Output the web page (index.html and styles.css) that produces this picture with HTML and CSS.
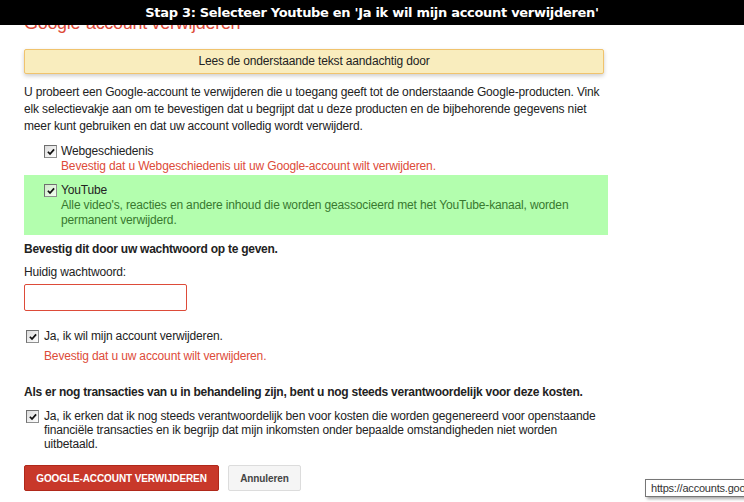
FILE: index.html
```html
<!DOCTYPE html>
<html lang="nl">
<head>
  <meta charset="UTF-8" />
  <title>Google-account verwijderen</title>
  <link rel="stylesheet" href="styles.css">
</head>
<body>

  <div class="banner">Stap 3: Selecteer Youtube en 'Ja ik wil mijn account verwijderen'</div>

  <div class="page">
    <h1 class="title">Google-account verwijderen</h1>

    <div class="notice">Lees de onderstaande tekst aandachtig door</div>

    <p class="intro">U probeert een Google-account te verwijderen die u toegang geeft tot de onderstaande Google-producten. Vink<br>
      elk selectievakje aan om te bevestigen dat u begrijpt dat u deze producten en de bijbehorende gegevens niet<br>
      meer kunt gebruiken en dat uw account volledig wordt verwijderd.</p>

    <!-- products -->
    <div class="product">
      <span class="checkbox"><svg viewBox="0 0 9 9"><path d="M1 4.2 L3.4 6.8 L8 1.6" /></svg></span>
      <div class="product-text">
        <div class="product-name">Webgeschiedenis</div>
        <div class="error">Bevestig dat u Webgeschiedenis uit uw Google-account wilt verwijderen.</div>
      </div>
    </div>

    <div class="product selected">
      <span class="checkbox"><svg viewBox="0 0 9 9"><path d="M1 4.2 L3.4 6.8 L8 1.6" /></svg></span>
      <div class="product-text">
        <div class="product-name">YouTube</div>
        <div class="product-desc">Alle video's, reacties en andere inhoud die worden geassocieerd met het YouTube-kanaal, worden<br>
          permanent verwijderd.</div>
      </div>
    </div>

    <div class="section-title">Bevestig dit door uw wachtwoord op te geven.</div>
    <div class="field-label">Huidig wachtwoord:</div>
    <input class="password" type="password" />

    <div class="confirm">
      <span class="checkbox"><svg viewBox="0 0 9 9"><path d="M1 4.2 L3.4 6.8 L8 1.6" /></svg></span>
      <div>Ja, ik wil mijn account verwijderen.</div>
    </div>
    <div class="error confirm-error">Bevestig dat u uw account wilt verwijderen.</div>

    <div class="section-title section-costs">Als er nog transacties van u in behandeling zijn, bent u nog steeds verantwoordelijk voor deze kosten.</div>

    <div class="confirm confirm-costs">
      <span class="checkbox"><svg viewBox="0 0 9 9"><path d="M1 4.2 L3.4 6.8 L8 1.6" /></svg></span>
      <div>Ja, ik erken dat ik nog steeds verantwoordelijk ben voor kosten die worden gegenereerd voor openstaande<br>
        financiële transacties en ik begrijp dat mijn inkomsten onder bepaalde omstandigheden niet worden<br>
        uitbetaald.</div>
    </div>

    <div class="actions">
      <button class="btn btn-delete">GOOGLE-ACCOUNT VERWIJDEREN</button>
      <button class="btn btn-cancel">Annuleren</button>
    </div>
  </div>

  <div class="tooltip">https://accounts.google.com/DeleteAccount</div>

</body>
</html>
```

FILE: styles.css
```css
:root {
  --text: #222222;
  --red: #dd4b39;
  --green-bg: #b3feae;
  --green-text: #38792f;
}

* {
  box-sizing: border-box;
  margin: 0;
  padding: 0;
}

body {
  font-family: "Liberation Sans", Arial, sans-serif;
  font-size: 12px;
  letter-spacing: -0.15px;
  color: var(--text);
  background: #ffffff;
  width: 744px;
  height: 502px;
  overflow: hidden;
  position: relative;
}

.banner {
  position: absolute;
  top: 0;
  left: 0;
  right: 0;
  height: 25px;
  background: #000000;
  color: #ffffff;
  font-family: "DejaVu Sans", sans-serif;
  font-weight: bold;
  font-size: 13px;
  letter-spacing: -0.3px;
  line-height: 25px;
  text-align: center;
  z-index: 10;
}

.page {
  padding: 12px 0 0 24px;
  width: 640px;
}

.title {
  font-size: 18px;
  line-height: 22px;
  letter-spacing: -0.3px;
  font-weight: normal;
  color: var(--red);
}

.notice {
  margin-top: 15px;
  width: 580px;
  height: 25px;
  line-height: 23px;
  background: #f9edbe;
  border: 1px solid #f0c36d;
  border-radius: 2px;
  box-shadow: 0 2px 4px rgba(0, 0, 0, 0.2);
  text-align: center;
}

.intro {
  margin-top: 10px;
  line-height: 17px;
}

.product {
  display: flex;
  align-items: flex-start;
  gap: 4px;
  margin-top: 9px;
  padding-left: 20px;
  width: 584px;
  line-height: 15px;
}

.product.selected {
  margin-top: 1px;
  padding-top: 8px;
  padding-bottom: 7px;
  background: var(--green-bg);
}

.product-desc {
  color: var(--green-text);
}

.error {
  color: var(--red);
}

.checkbox {
  display: inline-flex;
  align-items: center;
  justify-content: center;
  flex: none;
  width: 13px;
  height: 13px;
  margin-top: 1px;
  border: 1px solid #8e8f8f;
  border-top-color: #6f6f6f;
  border-left-color: #6f6f6f;
  background: linear-gradient(135deg, #dcdcdc, #ffffff);
}

.selected .checkbox {
  background: linear-gradient(135deg, #cfe9c9, #f4fff2);
}

.checkbox svg {
  width: 8px;
  height: 8px;
  margin-top: 1px;
}

.checkbox path {
  fill: none;
  stroke: #111111;
  stroke-width: 2;
}

.section-title {
  margin-top: 7px;
  font-weight: bold;
  letter-spacing: -0.25px;
  line-height: 15px;
}

.field-label {
  margin-top: 8px;
  line-height: 15px;
}

.password {
  display: block;
  margin-top: 4px;
  width: 163px;
  height: 27px;
  border: 1px solid #dd4b39;
  border-radius: 2px;
  background: #ffffff;
}

.confirm {
  display: flex;
  align-items: flex-start;
  gap: 5px;
  margin-top: 18px;
  padding-left: 2px;
  line-height: 15px;
}

.confirm-error {
  margin-top: 5px;
  padding-left: 20px;
  line-height: 15px;
}

.section-costs {
  margin-top: 21px;
}

.confirm-costs {
  margin-top: 9px;
  line-height: 14px;
}

.actions {
  display: flex;
  gap: 9px;
  margin-top: 14px;
}

.btn {
  height: 26px;
  border-radius: 2px;
  font-family: "Liberation Sans", Arial, sans-serif;
  font-weight: bold;
  font-size: 10px;
  letter-spacing: -0.1px;
}

.btn-delete {
  width: 195px;
  background: #c8382a;
  border: 1px solid #b0281a;
  color: #ffffff;
}

.btn-cancel {
  width: 73px;
  background: #f5f5f5;
  border: 1px solid #dcdcdc;
  color: #444444;
}

.tooltip {
  position: absolute;
  left: 645px;
  top: 479px;
  height: 18px;
  padding: 0 5px;
  white-space: nowrap;
  font-size: 11px;
  letter-spacing: -0.2px;
  line-height: 16px;
  color: #333333;
  background: #ffffff;
  border: 1px solid #767676;
  box-shadow: 2px 2px 3px rgba(0, 0, 0, 0.35);
}
```
